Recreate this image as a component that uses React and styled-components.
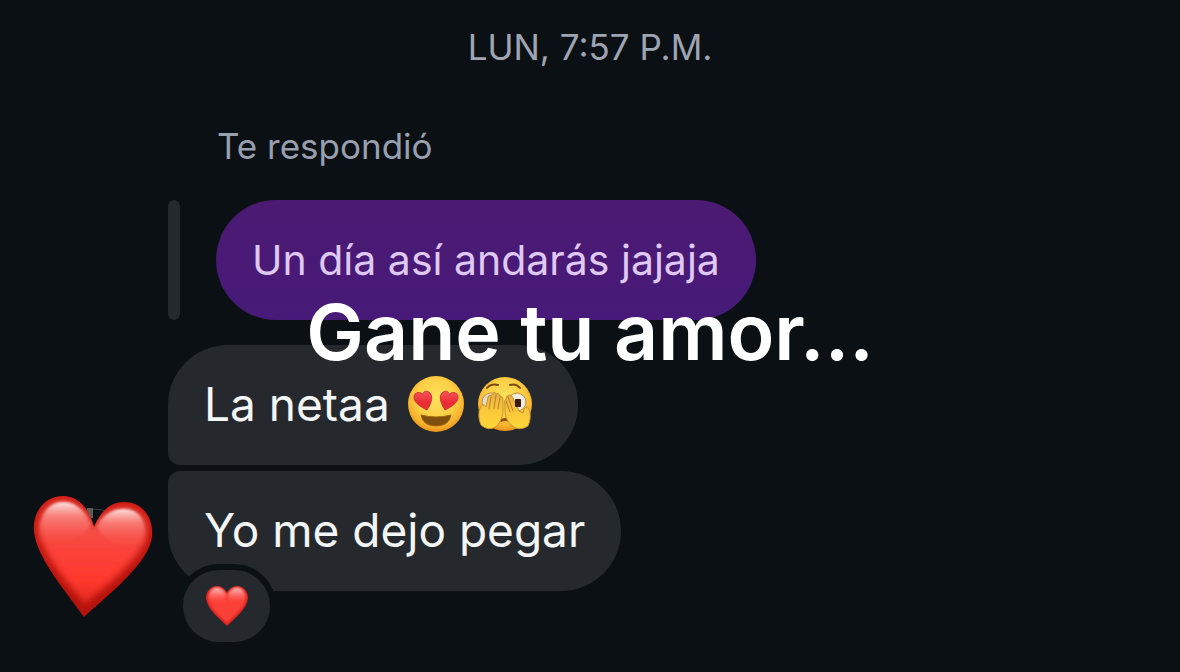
import React from "react";
import styled, { createGlobalStyle } from "styled-components";

const App = () => {
  return (
    <>
      <GlobalStyle />
      <Thread>
        <DateLabel>LUN, 7:57 P.M.</DateLabel>
        <ReplyLabel>Te respondió</ReplyLabel>
        <Quote>
          <QuoteBar />
          <QuotedBubble>Un día así andarás jajaja</QuotedBubble>
        </Quote>
        <Messages>
          <Bubble $first>
            La netaa
            <Emojis>
              <HeartEyes />
              <Peeking />
            </Emojis>
          </Bubble>
          <LastRow>
            <Avatar>
              <BigHeart />
            </Avatar>
            <BubbleWrapper>
              <Bubble>Yo me dejo pegar</Bubble>
              <Reaction>
                <SmallHeart />
              </Reaction>
            </BubbleWrapper>
          </LastRow>
        </Messages>
        <Caption>Gane tu amor...</Caption>
      </Thread>
    </>
  );
};

const BigHeart = () => (
  <svg width="120" height="122" viewBox="13 14 120 122" role="img" aria-label="Corazón">
    <defs>
      <linearGradient id="bigFill" x1="0" y1="0" x2="0" y2="1">
        <stop offset="0" stopColor="#f0625b" />
        <stop offset="0.4" stopColor="#f8463e" />
        <stop offset="0.75" stopColor="#ff392e" />
        <stop offset="1" stopColor="#e22a20" />
      </linearGradient>
      <linearGradient id="bigShine" x1="0" y1="0" x2="0" y2="1">
        <stop offset="0" stopColor="#fff" stopOpacity="0.85" />
        <stop offset="0.35" stopColor="#ffb8b2" stopOpacity="0.4" />
        <stop offset="1" stopColor="#ff6058" stopOpacity="0" />
      </linearGradient>
      <linearGradient id="bigRim" x1="0" y1="0" x2="0" y2="1">
        <stop offset="0" stopColor="#cf1a12" />
        <stop offset="1" stopColor="#b0120b" />
      </linearGradient>
      <filter id="bigSoft" x="-10%" y="-10%" width="120%" height="120%">
        <feGaussianBlur stdDeviation="3" />
      </filter>
      <filter id="bigSoftShine" x="-10%" y="-10%" width="120%" height="120%">
        <feGaussianBlur stdDeviation="1.2" />
      </filter>
      <clipPath id="bigClip">
        <path d={bigHeartPath} />
      </clipPath>
    </defs>
    <path d="M67 27h6v10h-6z" fill="#5d5d58" />
    <path d="M73 28q9 0 15 3" fill="none" stroke="#363a46" strokeWidth="1" />
    <path d={bigHeartPath} fill="url(#bigRim)" />
    <g clipPath="url(#bigClip)">
      <path
        filter="url(#bigSoft)"
        fill="url(#bigFill)"
        d="M74 48C70 33 58 20 43 20C28 20 18 33 19 50C22 72 46 100 65 123C88 103 121 78 126 55C129 38 119 27 104 27C89 27 78 37 74 48Z"
      />
      <path
        filter="url(#bigSoftShine)"
        fill="url(#bigShine)"
        d="M20 62C16 36 28 21 43 21C56 21 65 30 71 43C64 58 38 68 20 62Z"
      />
      <path
        filter="url(#bigSoftShine)"
        fill="url(#bigShine)"
        d="M77 45C83 34 92 28 104 28C120 28 129 42 124 65C108 72 84 62 77 45Z"
      />
    </g>
  </svg>
);

const SmallHeart = () => (
  <svg width="42" height="42" viewBox="0 0 42 42" role="img" aria-label="Corazón">
    <defs>
      <linearGradient id="smallShine" x1="0" y1="0" x2="0" y2="1">
        <stop offset="0" stopColor="#ffc5c5" />
        <stop offset="1" stopColor="#ff5a55" stopOpacity="0" />
      </linearGradient>
      <filter id="smallSoft">
        <feGaussianBlur stdDeviation="0.8" />
      </filter>
    </defs>
    <path
      fill="#d9221d"
      d="M21 8C18 3 15 1 11 1C5 1 0 6 0 13C1 24 13 33 21 41C29 33 41 24 42 13C42 6 37 1 31 1C27 1 23 4 21 8Z"
    />
    <path
      fill="#fb4039"
      filter="url(#smallSoft)"
      d="M21 10C18 5 15 3 11 3C6 3 2 7 2 13C3 23 14 31 21 38C28 31 39 23 40 13C40 7 36 3 31 3C27 3 23 6 21 10Z"
    />
    <path
      fill="url(#smallShine)"
      filter="url(#smallSoft)"
      d="M3 13C3 0 16 0 20 10C19 20 6 20 3 13ZM22 10C26 0 39 0 39 13C36 20 24 20 22 10Z"
    />
  </svg>
);

const FaceGradient = ({ id }) => (
  <radialGradient id={id} cx="0.5" cy="0.4" r="0.62">
    <stop offset="0" stopColor="#ffe25c" />
    <stop offset="0.55" stopColor="#fdd046" />
    <stop offset="0.82" stopColor="#f7b02c" />
    <stop offset="1" stopColor="#e28c18" />
  </radialGradient>
);

const HeartEyes = () => (
  <svg width="56" height="56" viewBox="0 0 56 56" role="img" aria-label="Cara con ojos de corazón">
    <defs>
      <FaceGradient id="faceHearts" />
      <linearGradient id="eyeHeart" x1="0" y1="0" x2="0" y2="1">
        <stop offset="0" stopColor="#f8545a" />
        <stop offset="0.6" stopColor="#ea2c35" />
      </linearGradient>
    </defs>
    <circle cx="28" cy="28" r="28" fill="url(#faceHearts)" />
    <path
      d="M13 39Q28 43 43 39Q41 50 28 50Q15 50 13 39Z"
      fill="#80500f"
      stroke="#a0660f"
      strokeWidth="1"
      strokeLinejoin="round"
    />
    <path
      d="M14.500 19C13 15 6 16 6 21C6 27 13 31 19 34C22 29 26 22 22 17C19 14 15 15 14.500 19Z"
      fill="url(#eyeHeart)"
      stroke="#d3303a"
      strokeWidth="1"
    />
    <path
      d="M41.500 19C43 15 50 16 50 21C50 27 43 31 37 34C34 29 30 22 34 17C37 14 41 15 41.500 19Z"
      fill="url(#eyeHeart)"
      stroke="#d3303a"
      strokeWidth="1"
    />
  </svg>
);

const Peeking = () => (
  <svg width="56" height="56" viewBox="0 0 56 56" role="img" aria-label="Cara asomándose entre las manos">
    <defs>
      <FaceGradient id="facePeek" />
      <linearGradient id="handFill" x1="0" y1="0" x2="0" y2="1">
        <stop offset="0" stopColor="#e3ad48" />
        <stop offset="0.5" stopColor="#fbc83a" />
        <stop offset="1" stopColor="#ffd83a" />
      </linearGradient>
    </defs>
    <circle cx="28" cy="28" r="27" fill="url(#facePeek)" />
    <path
      d="M10 12Q14 7 21 9M33 9Q39 7 43 12"
      fill="none"
      stroke="#7a4a12"
      strokeWidth="2"
      strokeLinecap="round"
    />
    <ellipse cx="14" cy="26" rx="9" ry="9" fill="#e4dccb" stroke="#c08f3c" strokeWidth="1" />
    <ellipse cx="40" cy="26" rx="9" ry="9" fill="#f1ebdf" stroke="#c08f3c" strokeWidth="1" />
    <path d="M23 45Q28 42 33 45" fill="none" stroke="#8b4d17" strokeWidth="3" />
    <g fill="url(#handFill)" stroke="#c9932c" strokeWidth="1" strokeLinejoin="round">
      <path d="M4 49C1 42 1 33 5 29Q8 28 9 31L11 21Q12 18 14 20L16 17Q18 15 19 18Q22 16 23 20Q26 20 26 24L26 33Q26 43 20 50Q12 56 4 49Z" />
      <path d="M51 50Q55 41 52 33Q50 29 47 33L46 37L42 35L35 20Q32 18 31 20Q29 20 29 23Q27 24 28 31Q27 42 34 49Q42 56 51 50Z" />
    </g>
    <path
      d="M14 21L12 33M19 19L17 33M23 21L21 33M31 21L36 35M29 25L33 36"
      fill="none"
      stroke="#b98226"
      strokeWidth="1"
      strokeLinecap="round"
    />
    <rect x="38" y="23" width="6" height="8" rx="1" fill="#3a1d10" />
  </svg>
);

const bigHeartPath =
  "M74 46C69 27 58 15 43 15C25 15 12 31 14 51C17 77 44 108 64 136C89 113 128 83 132 56C134 36 122 21 104 21C90 21 80 31 74 46Z";

const GlobalStyle = createGlobalStyle`
  * {
    box-sizing: border-box;
  }

  body {
    margin: 0;
    background: #0b1014;
    font-family: Inter, "Liberation Sans", sans-serif;
  }
`;

const Thread = styled.main`
  position: relative;
  min-height: 100vh;
  padding-top: 24px;
  background: #0b1014;
  overflow: hidden;
`;

const DateLabel = styled.div`
  color: #9fa4b3;
  font-size: 35px;
  line-height: 46px;
  text-align: center;
`;

const ReplyLabel = styled.div`
  margin: 53px 0 31px 217px;
  color: #989fae;
  font-size: 35px;
  line-height: 46px;
`;

const Quote = styled.div`
  display: flex;
  gap: 36px;
  padding-left: 168px;
`;

const QuoteBar = styled.div`
  width: 12px;
  border-radius: 6px;
  background: #25292d;
`;

const QuotedBubble = styled.div`
  padding: 32px 36px;
  border-radius: 60px;
  background: linear-gradient(#4b1a72, #471a79);
  color: #dfc8f3;
  font-size: 41px;
  line-height: 56px;
  white-space: nowrap;
`;

const Messages = styled.div`
  display: flex;
  flex-direction: column;
  align-items: flex-start;
  gap: 6px;
  margin-top: 25px;
  padding-left: 168px;
`;

const Bubble = styled.div`
  display: flex;
  align-items: center;
  gap: 18px;
  padding: 31px 36px 33px;
  border-radius: ${(props) =>
    props.$first ? "60px 60px 60px 12px" : "12px 60px 60px 60px"};
  background: #25292d;
  color: #f3f5f7;
  font-size: 46px;
  line-height: 56px;
  white-space: nowrap;
`;

const Emojis = styled.span`
  display: flex;
  gap: 13px;
  padding-right: 9px;
`;

const LastRow = styled.div`
  display: flex;
  align-items: flex-start;
  margin-left: -168px;
`;

const Avatar = styled.div`
  display: flex;
  justify-content: flex-end;
  width: 168px;
  padding: 24px 15px 0 0;
`;

const BubbleWrapper = styled.div`
  position: relative;
`;

const Reaction = styled.div`
  position: absolute;
  left: 9px;
  top: 93px;
  display: flex;
  align-items: center;
  justify-content: center;
  width: 99px;
  height: 84px;
  border: 6px solid #0b1014;
  border-radius: 42px;
  background: #25292d;
`;

const Caption = styled.h1`
  position: absolute;
  top: 284px;
  left: 0;
  right: 0;
  margin: 0;
  color: #fff;
  font-size: 77px;
  font-weight: 600;
  line-height: 96px;
  text-align: center;
`;

export default App;
